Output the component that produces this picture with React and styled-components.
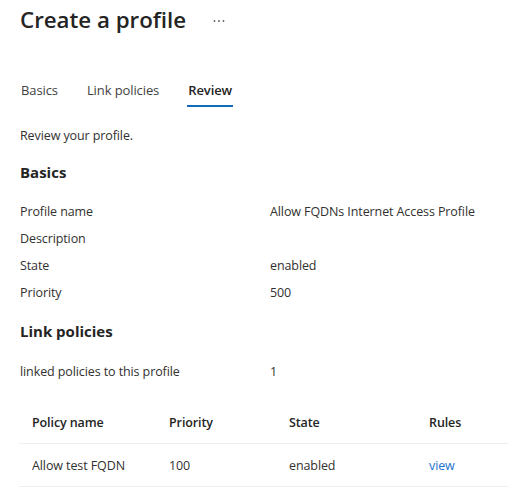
import React from 'react';
import styled, { createGlobalStyle } from 'styled-components';

const GlobalStyle = createGlobalStyle`
  body {
    margin: 0;
    background: #ffffff;
    font-family: 'Open Sans', 'Noto Sans', sans-serif;
    color: #323130;
  }
`;

const Page = styled.div`
  padding: 4px 0 0 20px;
  width: 488px;
`;

const TitleRow = styled.div`
  display: flex;
  align-items: center;
  height: 32px;
`;

const Title = styled.h1`
  margin: 0;
  font-size: 22.3px;
  font-weight: 600;
  line-height: 32px;
  color: #242424;
`;

const More = styled.svg`
  margin-left: 27px;
  margin-top: 2px;
`;

const Tabs = styled.div`
  display: flex;
  gap: 27px;
  margin-top: 44px;
`;

const Tab = styled.div`
  padding: 0 1px 5px;
  font-size: 13px;
  line-height: 20px;
  letter-spacing: -0.1px;
  color: ${(p) => (p.active ? '#242424' : '#424242')};
  font-weight: ${(p) => (p.active ? 600 : 400)};
  border-bottom: 2px solid ${(p) => (p.active ? '#0f6cbd' : 'transparent')};
`;

const Intro = styled.p`
  margin: 19px 0 0;
  font-size: 12.5px;
  line-height: 20px;
  letter-spacing: -0.1px;
`;

const SectionTitle = styled.h2`
  margin: ${(p) => p.top}px 0 0;
  font-size: 15px;
  font-weight: 700;
  line-height: 22px;
  color: #242424;
`;

const Fields = styled.div`
  margin-top: ${(p) => p.top}px;
`;

const Field = styled.div`
  display: grid;
  grid-template-columns: 250px 1fr;
  align-items: center;
  height: 27px;
  font-size: 12.5px;
  letter-spacing: -0.1px;
  color: #323130;
`;

const Table = styled.div`
  margin-top: 16px;
  margin-left: -1px;
`;

const TRow = styled.div`
  display: grid;
  grid-template-columns: 137px 120px 140px 1fr;
  height: 42px;
  align-items: center;
  border-bottom: 1px solid #f0efee;
  font-size: 12.5px;
  letter-spacing: -0.1px;
  font-weight: ${(p) => (p.head ? 600 : 400)};
  color: ${(p) => (p.head ? '#242424' : '#323130')};
`;

const Cell = styled.div`
  padding-left: 13px;
`;

const Link = styled.a`
  color: #1a73cf;
  text-decoration: none;
`;

const basics = [
  ['Profile name', 'Allow FQDNs Internet Access Profile'],
  ['Description', ''],
  ['State', 'enabled'],
  ['Priority', '500'],
];

const App = () => (
  <>
    <GlobalStyle />
    <Page>
      <TitleRow>
        <Title>Create a profile</Title>
        <More width="12" height="4" viewBox="0 0 12 4">
          <circle cx="1.5" cy="2" r="0.9" fill="#605e5c" />
          <circle cx="6" cy="2" r="0.9" fill="#605e5c" />
          <circle cx="10.5" cy="2" r="0.9" fill="#605e5c" />
        </More>
      </TitleRow>

      <Tabs>
        <Tab>Basics</Tab>
        <Tab>Link policies</Tab>
        <Tab active>Review</Tab>
      </Tabs>

      <Intro>Review your profile.</Intro>

      <SectionTitle top={15}>Basics</SectionTitle>
      <Fields top={15}>
        {basics.map(([label, value]) => (
          <Field key={label}>
            <span>{label}</span>
            <span>{value}</span>
          </Field>
        ))}
      </Fields>

      <SectionTitle top={14}>Link policies</SectionTitle>
      <Fields top={16}>
        <Field>
          <span>linked policies to this profile</span>
          <span>1</span>
        </Field>
      </Fields>

      <Table>
        <TRow head>
          <Cell>Policy name</Cell>
          <Cell>Priority</Cell>
          <Cell>State</Cell>
          <Cell>Rules</Cell>
        </TRow>
        <TRow>
          <Cell>Allow test FQDN</Cell>
          <Cell>100</Cell>
          <Cell>enabled</Cell>
          <Cell>
            <Link href="#">view</Link>
          </Cell>
        </TRow>
      </Table>
    </Page>
  </>
);

export default App;
